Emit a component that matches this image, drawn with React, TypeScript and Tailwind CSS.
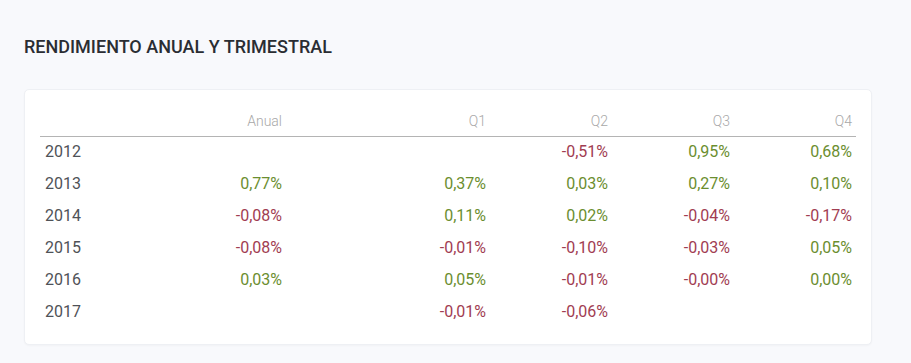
const ROWS: { year: string; anual: string; q: string[] }[] = [
  { year: '2012', anual: '', q: ['', '-0,51%', '0,95%', '0,68%'] },
  { year: '2013', anual: '0,77%', q: ['0,37%', '0,03%', '0,27%', '0,10%'] },
  { year: '2014', anual: '-0,08%', q: ['0,11%', '0,02%', '-0,04%', '-0,17%'] },
  { year: '2015', anual: '-0,08%', q: ['-0,01%', '-0,10%', '-0,03%', '0,05%'] },
  { year: '2016', anual: '0,03%', q: ['0,05%', '-0,01%', '-0,00%', '0,00%'] },
  { year: '2017', anual: '', q: ['-0,01%', '-0,06%', '', ''] },
];

function Value({ v }: { v: string }) {
  const color = v.startsWith('-') ? 'text-[#a13d52]' : 'text-[#6b8e2f]';
  return <td className={`w-[122px] pr-1 text-right ${color}`}>{v}</td>;
}

export default function App() {
  return (
    <div
      className="w-[911px] h-[363px] bg-[#f8f9fc] px-6 pt-[36px]"
      style={{ fontFamily: 'Roboto, "Liberation Sans", sans-serif' }}
    >
      <h2 className="text-[18px] leading-[22px] font-medium text-[#2a2d33]">
        RENDIMIENTO ANUAL Y TRIMESTRAL
      </h2>

      <div className="mt-[31px] w-[848px] h-[256px] bg-white rounded-[5px] border border-[#eef0f4] shadow-[0_1px_2px_rgba(0,0,0,0.03)] px-[15px] pt-[18px]">
        <table className="w-[816px] border-collapse text-[16px] table-fixed">
          <thead>
            <tr className="h-[28px] border-b border-[#b4b4b4] text-[#a8a8a8] text-[14px]">
              <th className="w-[124px]" />
              <th className="w-[122px] pr-1 text-right font-light">Anual</th>
              <th className="w-[82px]" />
              <th className="w-[122px] pr-1 text-right font-light">Q1</th>
              <th className="w-[122px] pr-1 text-right font-light">Q2</th>
              <th className="w-[122px] pr-1 text-right font-light">Q3</th>
              <th className="w-[122px] pr-1 text-right font-light">Q4</th>
            </tr>
          </thead>
          <tbody>
            {ROWS.map(r => (
              <tr key={r.year} className="h-[32px]">
                <td className="pl-[5px] text-[#4f5257]">{r.year}</td>
                <Value v={r.anual} />
                <td />
                {r.q.map((v, i) => (
                  <Value key={i} v={v} />
                ))}
              </tr>
            ))}
          </tbody>
        </table>
      </div>
    </div>
  );
}
